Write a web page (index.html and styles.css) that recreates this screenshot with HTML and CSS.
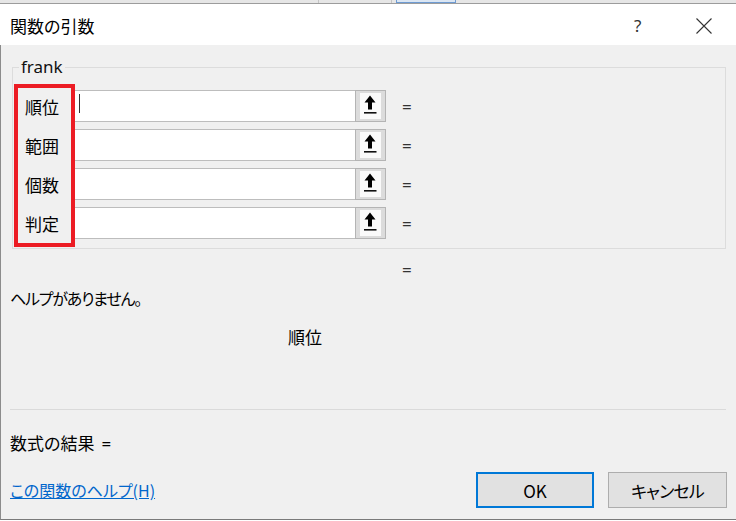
FILE: index.html
```html
<!DOCTYPE html>
<html lang="ja">
<head>
<meta charset="utf-8">
<title>関数の引数</title>
<link rel="stylesheet" href="styles.css">
</head>
<body>
<div class="strip"><span class="strip-tick t1"></span><span class="strip-tick t2"></span><span class="strip-sel"></span></div>
<div class="titlebar">
  <span class="title">関数の引数</span>
  <span class="help">?</span>
  <span class="close"><svg width="16" height="16" viewBox="0 0 16 16"><path d="M0.5 0.5 L15.5 15.5 M15.5 0.5 L0.5 15.5" stroke="#333" stroke-width="1.1" fill="none"/></svg></span>
</div>
<div class="content">
  <fieldset class="args">
    <legend>frank</legend>
    <div class="row"><span class="label">順位</span><div class="field"><span class="caret"></span></div><button class="ref"><span class="ref-inner"><svg width="21" height="26" viewBox="0 0 21 26"><path d="M10 2.5 L15.5 9.5 L12 9.5 L12 16.5 L8 16.5 L8 9.5 L4.5 9.5 Z" fill="#000"/><rect x="4" y="19" width="12.5" height="1.6" fill="#111"/></svg></span></button><span class="eq">=</span></div>
    <div class="row"><span class="label">範囲</span><div class="field"></div><button class="ref"><span class="ref-inner"><svg width="21" height="26" viewBox="0 0 21 26"><path d="M10 2.5 L15.5 9.5 L12 9.5 L12 16.5 L8 16.5 L8 9.5 L4.5 9.5 Z" fill="#000"/><rect x="4" y="19" width="12.5" height="1.6" fill="#111"/></svg></span></button><span class="eq">=</span></div>
    <div class="row"><span class="label">個数</span><div class="field"></div><button class="ref"><span class="ref-inner"><svg width="21" height="26" viewBox="0 0 21 26"><path d="M10 2.5 L15.5 9.5 L12 9.5 L12 16.5 L8 16.5 L8 9.5 L4.5 9.5 Z" fill="#000"/><rect x="4" y="19" width="12.5" height="1.6" fill="#111"/></svg></span></button><span class="eq">=</span></div>
    <div class="row"><span class="label">判定</span><div class="field"></div><button class="ref"><span class="ref-inner"><svg width="21" height="26" viewBox="0 0 21 26"><path d="M10 2.5 L15.5 9.5 L12 9.5 L12 16.5 L8 16.5 L8 9.5 L4.5 9.5 Z" fill="#000"/><rect x="4" y="19" width="12.5" height="1.6" fill="#111"/></svg></span></button><span class="eq">=</span></div>
  </fieldset>
  <div class="result-eq">=</div>
  <p class="desc">ヘルプがありません。</p>
  <p class="argname">順位</p>
  <div class="sep"></div>
  <p class="formula">数式の結果<span class="formula-eq">=</span></p>
  <div class="footer">
    <a class="helplink" href="#">この関数のヘルプ(H)</a>
    <button class="btn ok">OK</button>
    <button class="btn cancel">キャンセル</button>
  </div>
  <div class="redbox"></div>
</div>
</body>
</html>
```
FILE: styles.css
```css
* { box-sizing: border-box; }
html, body {
  margin: 0;
  padding: 0;
}
body {
  width: 736px;
  height: 521px;
  overflow: hidden;
  background: #ffffff;
  font-family: "Noto Sans CJK JP", "Noto Sans", sans-serif;
  font-size: 16px;
  color: #111;
  font-feature-settings: "palt";
}
.strip {
  height: 4px;
  background: #e6e6e6;
  border-bottom: 1px solid #9c9c9c;
  display: flex;
}
.strip-tick {
  width: 1px;
  height: 3px;
  background: #c4c4c4;
}
.t1 { margin-left: 318px; }
.t2 { margin-left: 72px; }
.strip-sel {
  margin-left: 4px;
  width: 60px;
  height: 3px;
  background: #dbe6f3;
  border: 1px solid #6e9bd2;
  border-top: none;
}
.titlebar {
  height: 41px;
  background: #ffffff;
  display: flex;
  align-items: center;
  padding: 2px 0 0 10px;
}
.title {
  font-size: 17px;
  color: #000;
  flex: 1;
}
.help {
  font-size: 17px;
  color: #333;
  width: 62px;
  font-family: "Noto Sans", sans-serif;
}
.close {
  width: 40px;
  display: flex;
  padding-top: 1px;
}
.content {
  position: relative;
  height: 475px;
  background: #f0f0f0;
  border-left: 1px solid #8c8c8c;
  border-bottom: 1px solid #7a7a7a;
  padding-top: 12px;
}
.args {
  margin: 0 0 0 11px;
  width: 714px;
  border: 1px solid #dcdcdc;
  padding: 13px 0 9px 0;
}
.args legend {
  margin-left: 6px;
  padding: 0 2px;
  line-height: 20px;
  font-family: "Noto Sans", sans-serif;
  font-size: 17px;
  color: #111;
}
.row {
  display: flex;
  align-items: center;
  height: 32px;
  margin-bottom: 7px;
}
.row:last-child { margin-bottom: 0; }
.label {
  margin-left: 12px;
  width: 47px;
  font-size: 17px;
  color: #000;
}
.field {
  width: 283px;
  height: 32px;
  background: #ffffff;
  border: 1px solid #bdbdbd;
  border-right: none;
  display: flex;
}
.caret {
  width: 1px;
  height: 19px;
  background: #333;
  margin: 3px 0 0 6px;
}
.ref {
  width: 31px;
  height: 32px;
  margin: 0;
  padding: 2px 0 0 4px;
  background: #dcdcdc;
  border: 1px solid #b4b4b4;
  display: flex;
  align-items: flex-start;
}
.ref-inner {
  width: 21px;
  height: 26px;
  background: #fafafa;
  display: block;
}
.ref-inner svg { display: block; }
.eq {
  margin-left: 16px;
  font-family: "Noto Sans", sans-serif;
  font-size: 17px;
  color: #333;
}
.result-eq {
  margin: 11px 0 0 401px;
  line-height: 20px;
  font-family: "Noto Sans", sans-serif;
  font-size: 17px;
  color: #333;
}
.desc {
  margin: 8px 0 0 9px;
  line-height: 20px;
  letter-spacing: -1.2px;
  color: #000;
}
.argname {
  margin: 19px 0 0 287px;
  line-height: 20px;
  font-size: 17px;
  color: #000;
}
.sep {
  margin: 62px 0 0 9px;
  width: 716px;
  height: 1px;
  background: #dadada;
}
.formula {
  margin: 23px 0 0 9px;
  line-height: 20px;
  font-size: 17px;
  color: #000;
}
.formula-eq {
  margin-left: 7px;
  font-family: "Noto Sans", sans-serif;
}
.footer {
  margin-top: 18px;
  display: flex;
  align-items: center;
  padding-left: 9px;
}
.helplink {
  color: #0066cc;
  text-decoration: underline;
  font-size: 16px;
  width: 466px;
}
.btn {
  height: 36px;
  margin: 0;
  background: #e1e1e1;
  font-family: "Noto Sans CJK JP", "Noto Sans", sans-serif;
  font-feature-settings: "palt";
  font-size: 17px;
  color: #000;
  padding: 0;
}
.ok {
  width: 118px;
  border: 2px solid #0078d7;
}
.cancel {
  width: 119px;
  margin-left: 14px;
  border: 1px solid #adadad;
  letter-spacing: -0.8px;
}
.redbox {
  position: absolute;
  top: 39px;
  left: 13px;
  width: 61px;
  height: 163px;
  border: 4px solid #ec1c24;
}
```
